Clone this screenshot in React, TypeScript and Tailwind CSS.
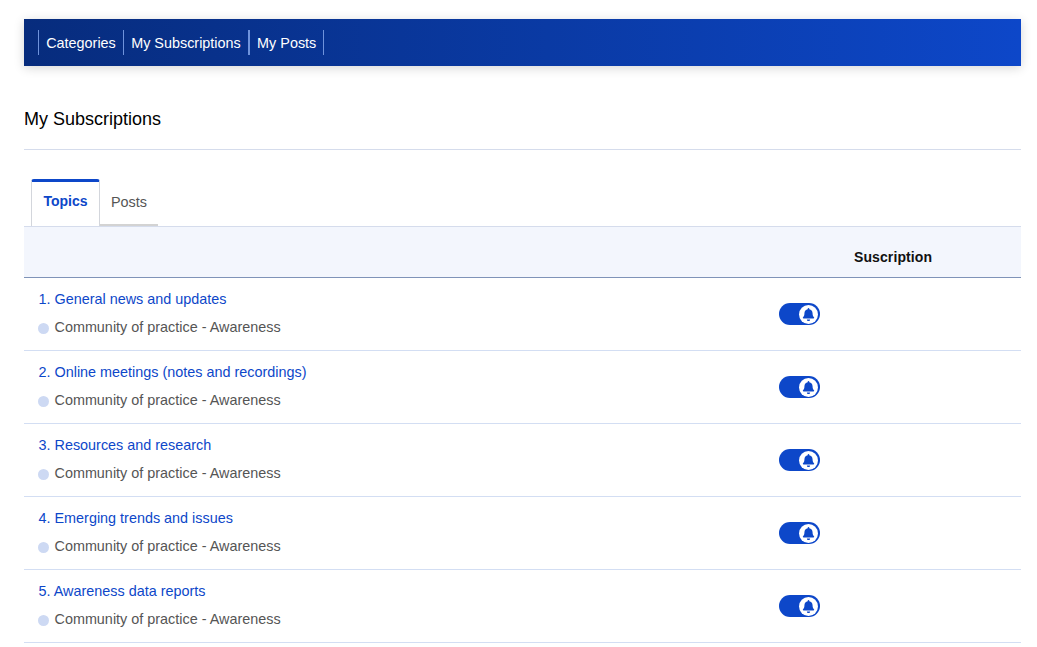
import { FaBell } from "react-icons/fa";

const NAV = ["Categories", "My Subscriptions", "My Posts"];

const TOPICS = [
  "1. General news and updates",
  "2. Online meetings (notes and recordings)",
  "3. Resources and research",
  "4. Emerging trends and issues",
  "5. Awareness data reports",
];

function BellToggle() {
  return (
    <div className="flex h-[22px] w-[41px] items-center justify-end rounded-full bg-[#0d47c9] pr-[1.5px]">
      <div className="flex h-[19px] w-[19px] items-center justify-center rounded-full bg-white">
        <FaBell className="h-[13px] w-[13px] text-[#0d47c9]" aria-hidden />
      </div>
    </div>
  );
}

export default function App() {
  return (
    <div className="bg-white pl-6 pr-4 pt-[19px] font-['Liberation_Sans',Arial,sans-serif]">
      <nav className="flex h-[47px] items-center bg-gradient-to-r from-[#072c7d] to-[#0d47c9] pl-[14px] shadow-[0_2px_10px_rgba(0,0,0,0.16)]">
        <div className="flex h-[25px] border-l border-[#6f93dc]">
          {NAV.map((item, i) => (
            <a
              key={item}
              className={`flex items-center border-r px-[7.2px] pt-[3px] text-[14.4px] text-white ${i === 1 ? "border-r-2 border-[#6f93dc]" : "border-[#6f93dc]"}`}
            >
              {item}
            </a>
          ))}
        </div>
      </nav>

      <h1 className="mt-[42px] text-lg leading-[22px] text-black">My Subscriptions</h1>
      <div className="mt-[19px] border-t border-[#d5dcec]" />

      {/* tabs */}
      <div className="mt-[29px] flex h-[47px] items-stretch pl-[7px]">
        <div className="flex w-[69px] justify-center rounded-t-[3px] border-x border-[#d3d6dc] border-t-[3px] border-t-[#0d47c9] bg-white pt-[9px] text-sm font-bold text-[#0d47c9]">
          Topics
        </div>
        <div className="w-[58px] border-b-2 border-[#d3d3d3] pl-[11px] pt-[13px] text-[14.4px] text-[#555]">Posts</div>
      </div>

      <div className="flex h-[52px] items-center border-y border-t-[#d5dcec] border-b-[#7f93b8] bg-[#f3f6fd] pt-[10px]">
        <div className="ml-[830px] text-sm font-bold tracking-[0.1px] text-[#111]">Suscription</div>
      </div>

      {TOPICS.map((topic) => (
        <div key={topic} className="flex h-[73px] items-center border-b border-[#d3def3] pl-[14.5px]">
          <div className="w-[740px] pb-[2px]">
            <a className="block text-[14.4px] leading-5 text-[#0d47c9]">{topic}</a>
            <div className="mt-[8.5px] flex items-center gap-[5.5px] text-[14.4px] leading-5 text-[#555]">
              <span className="-ml-[0.5px] mt-[2px] h-[11px] w-[11px] rounded-full bg-[#cdd9f3]" />
              Community of practice - Awareness
            </div>
          </div>
          <BellToggle />
        </div>
      ))}
    </div>
  );
}
